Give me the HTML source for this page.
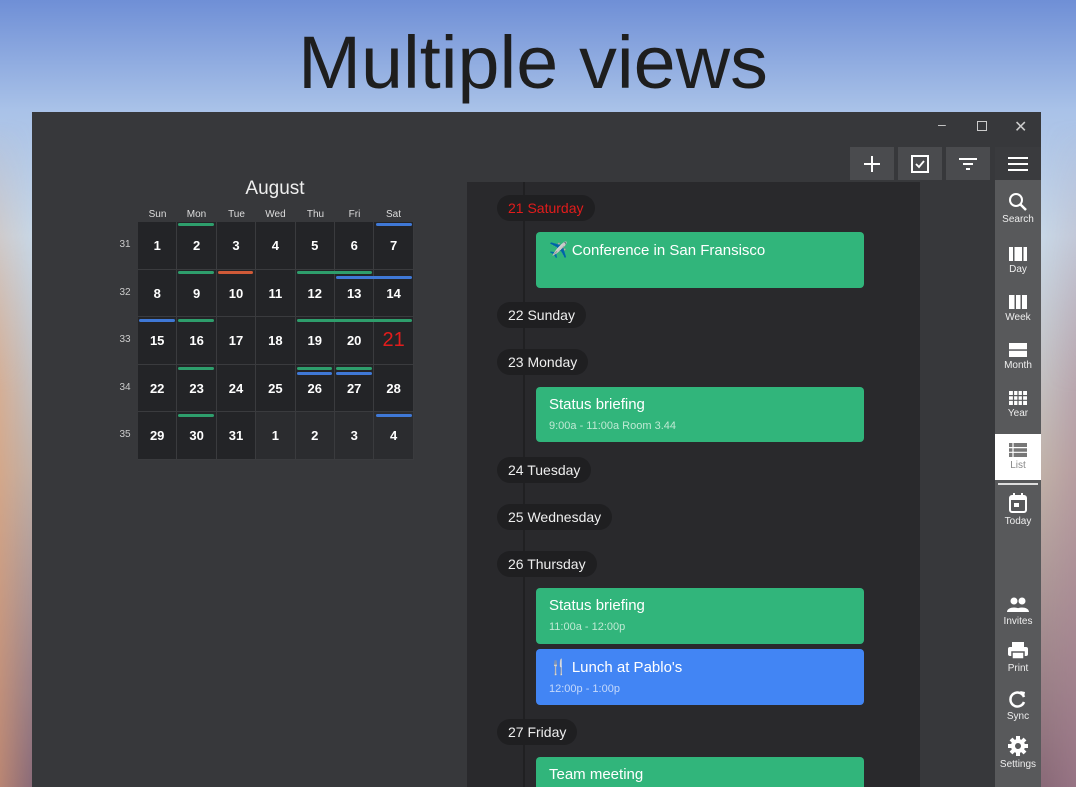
<!DOCTYPE html>
<html><head><meta charset="utf-8"><style>
*{margin:0;padding:0;box-sizing:border-box}
body{width:1076px;height:787px;overflow:hidden;position:relative;font-family:"Liberation Sans",sans-serif;
background:linear-gradient(180deg,#6f8fd6 0%,#a9c2e8 14%,#c8d7e6 30%,#c0b0a8 60%,#8a6a78 100%);}
.bgl{position:absolute;left:0;top:0;width:1076px;height:787px;background:linear-gradient(90deg,rgba(230,160,110,.5) 0%,rgba(0,0,0,0) 3%,rgba(0,0,0,0) 97%,rgba(170,130,150,.4) 100%);-webkit-mask:linear-gradient(180deg,transparent 15%,#000 50%);mask:linear-gradient(180deg,transparent 15%,#000 50%)}
h1{position:absolute;top:20px;left:0;width:1066px;text-align:center;font-weight:normal;font-size:74px;color:#1e1e1e;transform:scaleX(1.02)}
.win{position:absolute;left:32px;top:112px;width:1009px;height:675px;background:#37383b}
.ctl{position:absolute;top:0;color:#ccc;font-size:14px}
.tb{position:absolute;top:35px;height:33px;width:44px;background:#4a4b4e}
.tb svg{position:absolute;left:12px;top:7px}
.cell{position:absolute;width:38.4px;height:46.6px;background:#232427;color:#fff;font-size:13px;font-weight:bold;text-align:center;line-height:47px}
.cell.o{background:#2b2c2f}
.wk{position:absolute;color:#ccc;font-size:10px;width:20px;text-align:center}
.dh{position:absolute;color:#ddd;font-size:10px;width:39px;text-align:center;top:97px}
.bar{position:absolute;height:3px;border-radius:2px}
.g{background:#2e9e6c}.b{background:#3f78d6}.r{background:#d05a38}
.list{position:absolute;left:435px;top:70px;width:453px;height:605px;background:#29292c;overflow:hidden}
.line{position:absolute;left:56px;top:0;width:2px;height:605px;background:#202022}
.pill{position:absolute;left:30px;height:26px;border-radius:13px;background:#1f1f21;color:#eee;font-size:14px;line-height:26px;padding:0 11px}
.ev{position:absolute;left:69px;width:328px;border-radius:4px;background:#31b57b;color:#fff;font-size:15px;padding:9px 13px}
.ev small{display:block;font-size:11px;color:#bfe9d4;margin-top:7px}
.side{position:absolute;left:963px;top:68px;width:46px;height:607px;background:#58595b}
.si{position:absolute;left:0;width:46px;text-align:center;color:#eee;font-size:10px}
.si svg{display:block;margin:0 auto 2px}
</style></head><body>
<div class="bgl"></div>
<h1>Multiple views</h1>
<div class="win">
 <div class="ctl" style="left:906px;top:4px">–</div>
 <div style="position:absolute;left:945px;top:9px;width:10px;height:10px;border:1px solid #ccc"></div>
 <div class="ctl" style="left:982px;top:5px;font-size:16px">✕</div>
 <div class="tb" style="left:818px"><svg width="20" height="20"><path d="M10 2v16M2 10h16" stroke="#fff" stroke-width="2"/></svg></div>
 <div class="tb" style="left:866px"><svg width="20" height="20"><rect x="2" y="2" width="16" height="16" fill="none" stroke="#fff" stroke-width="2"/><path d="M6 10l3 3 5-6" fill="none" stroke="#fff" stroke-width="1.8"/></svg></div>
 <div class="tb" style="left:914px"><svg width="20" height="20"><path d="M1 5h18M5 10h10M8 15h4" stroke="#fff" stroke-width="2"/></svg></div>
 <div class="tb" style="left:963px;width:46px;background:#3a3b3e"><svg width="22" height="20"><path d="M1 4h20M1 10h20M1 16h20" stroke="#fff" stroke-width="2"/></svg></div>

 <div style="position:absolute;left:193px;top:66px;width:100px;text-align:center;color:#eee;font-size:19px">August</div>
 <div class="dh" style="left:106px">Sun</div><div class="dh" style="left:145px">Mon</div><div class="dh" style="left:185px">Tue</div><div class="dh" style="left:224px">Wed</div><div class="dh" style="left:264px">Thu</div><div class="dh" style="left:303px">Fri</div><div class="dh" style="left:342px">Sat</div>
 <div style="position:absolute;left:106px;top:110px;width:276px;height:238px;background:#3a3b3e"></div>
 <div id="cal"></div>

 <div class="list">
  <div class="line"></div>
  <div class="pill" style="top:13px;color:#e21c1c">21 Saturday</div>
  <div class="ev" style="top:50px;height:56px">✈️ Conference in San Fransisco</div>
  <div class="pill" style="top:120px">22 Sunday</div>
  <div class="pill" style="top:167px">23 Monday</div>
  <div class="ev" style="top:205px;height:55px">Status briefing<small>9:00a - 11:00a Room 3.44</small></div>
  <div class="pill" style="top:275px">24 Tuesday</div>
  <div class="pill" style="top:322px">25 Wednesday</div>
  <div class="pill" style="top:369px">26 Thursday</div>
  <div class="ev" style="top:406px;height:56px">Status briefing<small>11:00a - 12:00p</small></div>
  <div class="ev" style="top:467px;height:56px;background:#4285f4">🍴 Lunch at Pablo's<small style="color:#c5d9fb">12:00p - 1:00p</small></div>
  <div class="pill" style="top:537px">27 Friday</div>
  <div class="ev" style="top:575px;height:60px">Team meeting</div>
 </div>

 <div class="side">
  <div class="si" style="top:12px"><svg width="20" height="20"><circle cx="8" cy="8" r="6" fill="none" stroke="#fff" stroke-width="2"/><path d="M12 12l6 6" stroke="#fff" stroke-width="2.5"/></svg>Search</div>
  <div class="si" style="top:66px"><svg width="18" height="16"><rect x="0" y="1" width="18" height="14" fill="#fff"/><rect x="4" y="1" width="1.5" height="14" fill="#58595b"/><rect x="13" y="1" width="1.5" height="14" fill="#58595b"/></svg>Day</div>
  <div class="si" style="top:114px"><svg width="18" height="16"><rect x="0" y="1" width="18" height="14" fill="#fff"/><rect x="5.5" y="1" width="1.5" height="14" fill="#58595b"/><rect x="11.5" y="1" width="1.5" height="14" fill="#58595b"/></svg>Week</div>
  <div class="si" style="top:162px"><svg width="18" height="16"><rect x="0" y="1" width="18" height="14" fill="#fff"/><rect x="0" y="7.3" width="18" height="1.5" fill="#58595b"/></svg>Month</div>
  <div class="si" style="top:210px"><svg width="18" height="16"><rect x="0" y="1" width="18" height="14" fill="#fff"/><path d="M4.5 1v14M9 1v14M13.5 1v14M0 5.6h18M0 10.3h18" stroke="#58595b" stroke-width="1.2"/></svg>Year</div>
  <div style="position:absolute;left:0;top:254px;width:46px;height:46px;background:#fff"></div>
  <div class="si" style="top:262px;color:#888"><svg width="18" height="16"><rect x="0" y="1" width="18" height="14" fill="#777"/><path d="M0 5.6h18M0 10.3h18M4 1v14" stroke="#fff" stroke-width="1.2"/></svg>List</div>
  <div style="position:absolute;left:3px;top:303px;width:40px;height:2px;background:#ddd"></div>
  <div class="si" style="top:312px"><svg width="20" height="22"><rect x="2" y="4" width="16" height="16" rx="2" fill="none" stroke="#fff" stroke-width="2"/><rect x="2" y="4" width="16" height="4" fill="#fff"/><path d="M6 1v4M14 1v4" stroke="#fff" stroke-width="2"/><rect x="6" y="11" width="5" height="4" fill="#fff"/></svg>Today</div>
  <div class="si" style="top:416px"><svg width="22" height="18"><circle cx="7" cy="5" r="3.5" fill="#fff"/><circle cx="15" cy="5" r="3.5" fill="#fff"/><path d="M0 16c0-6 14-6 14 0zM8 16c0-6 14-6 14 0z" fill="#fff"/></svg>Invites</div>
  <div class="si" style="top:461px"><svg width="22" height="20"><rect x="5" y="1" width="12" height="5" fill="#fff"/><rect x="1" y="6" width="20" height="9" rx="2" fill="#fff"/><rect x="5" y="11" width="12" height="7" fill="#fff" stroke="#58595b" stroke-width="1.5"/></svg>Print</div>
  <div class="si" style="top:509px"><svg width="20" height="20"><path d="M16 8A7 7 0 1 0 16 13" fill="none" stroke="#fff" stroke-width="2.5"/><path d="M12 2l5 1-1 5z" fill="#fff"/></svg>Sync</div>
  <div class="si" style="top:555px"><svg width="22" height="22"><circle cx="11" cy="11" r="7" fill="#fff"/><path d="M11 1v20M1 11h20M4 4l14 14M18 4L4 18" stroke="#fff" stroke-width="4"/><circle cx="11" cy="11" r="3" fill="#58595b"/></svg>Settings</div>
 </div>
</div>
<script>
var c=document.getElementById('cal'),h='';
var d=[[1,2,3,4,5,6,7],[8,9,10,11,12,13,14],[15,16,17,18,19,20,21],[22,23,24,25,26,27,28],[29,30,31,1,2,3,4]];
for(var r=0;r<5;r++){var y=110+r*47.6;h+='<div class="wk" style="left:83px;top:'+(y+17)+'px">'+(31+r)+'</div>';
for(var k=0;k<7;k++){var x=106+k*39.4;var v=d[r][k];var o=(r==4&&k>=3);var st='';if(r==2&&k==6)st='color:#e21c1c;font-size:20px;font-weight:normal;';
h+='<div class="cell'+(o?' o':'')+'" style="left:'+x+'px;top:'+y+'px;'+st+'">'+v+'</div>';}}
function b(cls,x1,x2,y){h+='<div class="bar '+cls+'" style="left:'+x1+'px;width:'+(x2-x1)+'px;top:'+y+'px"></div>';}
var o=-32,t=-112;
b('g',178+o,214+o,223+t);b('b',376+o,412+o,223+t);
b('g',178+o,214+o,271+t);b('r',218+o,253+o,271+t);b('g',297+o,372+o,271+t);b('b',336+o,412+o,276+t);
b('b',139+o,175+o,319+t);b('g',178+o,214+o,319+t);b('g',297+o,412+o,319+t);
b('g',178+o,214+o,367+t);b('g',297+o,332+o,367+t);b('b',297+o,332+o,372+t);b('g',336+o,372+o,367+t);b('b',336+o,372+o,372+t);
b('g',178+o,214+o,414+t);b('b',376+o,412+o,414+t);
c.innerHTML=h;
</script>
</body></html>
